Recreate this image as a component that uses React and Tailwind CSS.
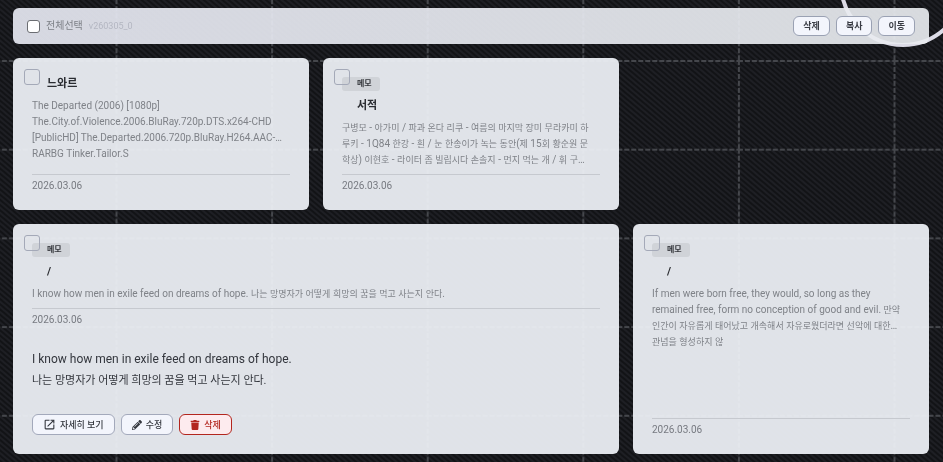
import { Fragment } from 'react';
import { FaPencilAlt, FaTrash } from 'react-icons/fa';
import { MdOpenInNew } from 'react-icons/md';

const notes = [
  {
    id: 1,
    title: '느와르',
    preview: [
      'The Departed (2006) [1080p]',
      'The.City.of.Violence.2006.BluRay.720p.DTS.x264-CHD',
      '[PublicHD] The.Departed.2006.720p.BluRay.H264.AAC-',
      'RARBG Tinker.Tailor.S',
    ],
    date: '2026.03.06',
  },
  {
    id: 2,
    tag: '메모',
    title: '서적',
    preview: [
      '구병모 - 아가미 / 파과 온다 리쿠 - 여름의 마지막 장미 무라카미 하',
      '루키 - 1Q84 한강 - 흰 / 눈 한송이가 녹는 동안(제 15회 황순원 문',
      '학상) 이현호 - 라이터 좀 빌립시다 손솔지 - 먼지 먹는 개 / 휘 구…',
    ],
    date: '2026.03.06',
  },
  {
    id: 3,
    tag: '메모',
    title: '/',
    preview: [
      'I know how men in exile feed on dreams of hope. 나는 망명자가 어떻게 희망의 꿈을 먹고 사는지 안다.',
    ],
    date: '2026.03.06',
    body: [
      { lang: 'en', text: 'I know how men in exile feed on dreams of hope.' },
      { lang: 'ko', text: '나는 망명자가 어떻게 희망의 꿈을 먹고 사는지 안다.' },
    ],
  },
  {
    id: 4,
    tag: '메모',
    title: '/',
    preview: [
      'If men were born free, they would, so long as they',
      'remained free, form no conception of good and evil. 만약',
      '인간이 자유롭게 태어났고 개속해서 자유로웠더라면 선악에 대한',
      '관념을 형성하지 않',
    ],
    date: '2026.03.06',
  },
];

const Backdrop = () => (
  <svg className="fixed inset-0 -z-10 h-full w-full" aria-hidden="true">
    <defs>
      <pattern id="stripes" width="4" height="4" patternUnits="userSpaceOnUse" patternTransform="rotate(40)">
        <rect width="4" height="4" fill="#1e1f24" />
        <rect width="4" height="2" fill="#121316" />
      </pattern>
      <pattern id="grid" x="115.5" y="60" width="155.6" height="88.7" patternUnits="userSpaceOnUse">
        <path d="M0 1H156" stroke="#45474c" strokeWidth="2" strokeDasharray="5 2" />
        <path d="M1 0V89" stroke="#45474c" strokeWidth="2" strokeDasharray="5 2" />
      </pattern>
    </defs>
    <rect width="100%" height="100%" fill="url(#stripes)" />
    <rect width="100%" height="100%" fill="url(#grid)" />
    <circle cx="903" cy="-17" r="62" fill="none" stroke="#dcdbe6" strokeWidth="4" />
  </svg>
);

const ToolbarButton = ({ children }) => (
  <button
    type="button"
    className="h-5 rounded-md border border-[#9aa1b3] bg-[#f3f5fc] px-[9px] text-[9px] leading-4 font-semibold text-[#3a3d45]"
  >
    {children}
  </button>
);

const Toolbar = () => (
  <header className="flex h-9 items-center justify-between rounded-md bg-linear-to-r from-[#e7e9f3]/92 to-[#e9ecf0]/92 px-[14px]">
    <div className="flex items-center gap-[6px]">
      <input
        id="select-all"
        type="checkbox"
        className="size-[13px] appearance-none rounded-[3px] border border-[#6b6d72] bg-white"
      />
      <label htmlFor="select-all" className="text-[10px] leading-4 text-[#7d8087]">
        전체선택
      </label>
      <span className="text-[9px] leading-4 text-[#b4b7c2]">v260305_0</span>
    </div>
    <div className="flex items-center gap-[6px]">
      <ToolbarButton>삭제</ToolbarButton>
      <ToolbarButton>복사</ToolbarButton>
      <ToolbarButton>이동</ToolbarButton>
    </div>
  </header>
);

const ActionButton = ({ icon: Icon, iconClass, danger, children }) => (
  <button
    type="button"
    className={`flex h-[21px] items-center gap-1 rounded-md border px-[10px] text-[9px] leading-4 font-medium ${
      danger
        ? 'border-[#b3261e] bg-[#fdebee] text-[#b3261e]'
        : 'border-[#a3a9bb] bg-[#f3f5fc] text-[#33363d]'
    }`}
  >
    <Icon className={iconClass} />
    {children}
  </button>
);

// Hangul runs are set one step smaller than the latin text around them
const MixedText = ({ text }) =>
  text.split(/([가-힣]+)/).map((part, i) =>
    i % 2 ? (
      <span key={i} className="text-[9px] leading-none">
        {part}
      </span>
    ) : (
      part
    )
  );

const NoteCard = ({ note }) => (
  <article
    className={`relative flex flex-col rounded-md bg-[#edf0f5]/94 px-[19px] pt-[18px] pb-[17px] ${
      note.body ? 'col-span-2' : ''
    }`}
  >
    <input
      type="checkbox"
      aria-label={note.title}
      className="absolute top-[11px] left-[11px] size-4 appearance-none rounded-[3px] border border-[#a4a9b8]"
    />
    {note.tag && (
      <span className="mt-px mb-[7px] self-start rounded-[3px] bg-[#d0d3d8] pr-2 pl-[15px] text-[8px] leading-[14px] font-semibold text-[#33363b]">
        {note.tag}
      </span>
    )}
    <h2 className="pl-[15px] text-[11px] leading-4 font-bold text-[#2a2c31]">{note.title}</h2>
    <p
      className={`mt-[6px] line-clamp-3 text-[10px] leading-4 text-[#7f8288] ${
        note.body ? '' : 'h-12 grow'
      }`}
    >
      {note.preview.map((line, i) => (
        <Fragment key={line}>
          {i > 0 && <br />}
          <MixedText text={line} />
        </Fragment>
      ))}
    </p>
    <time className="mt-[6px] border-t border-[#c6c9cf] pt-1 text-[10px] leading-[14px] text-[#777a81]">
      {note.date}
    </time>
    {note.body && (
      <>
        <div className="mt-[21px] leading-[22px] text-[#33363d]">
          {note.body.map(({ lang, text }) => (
            <p key={lang} lang={lang} className={lang === 'ko' ? 'text-[11px]' : 'text-[12px]'}>
              {text}
            </p>
          ))}
        </div>
        <div className="mt-[22px] mb-0.5 flex gap-[6px]">
          <ActionButton icon={MdOpenInNew} iconClass="size-[13px]">
            자세히 보기
          </ActionButton>
          <ActionButton icon={FaPencilAlt} iconClass="size-[10px]">
            수정
          </ActionButton>
          <ActionButton icon={FaTrash} iconClass="size-[10px]" danger>
            삭제
          </ActionButton>
        </div>
      </>
    )}
  </article>
);

const App = () => (
  <div className="relative isolate min-h-screen pt-2 pr-[14px] pb-2 pl-[13px] font-['Roboto','Noto_Sans_CJK_KR',sans-serif]">
    <Backdrop />
    <Toolbar />
    <main className="mt-[14px] grid grid-cols-3 gap-[14px]">
      {notes.map((note) => (
        <NoteCard key={note.id} note={note} />
      ))}
    </main>
  </div>
);

export default App;
